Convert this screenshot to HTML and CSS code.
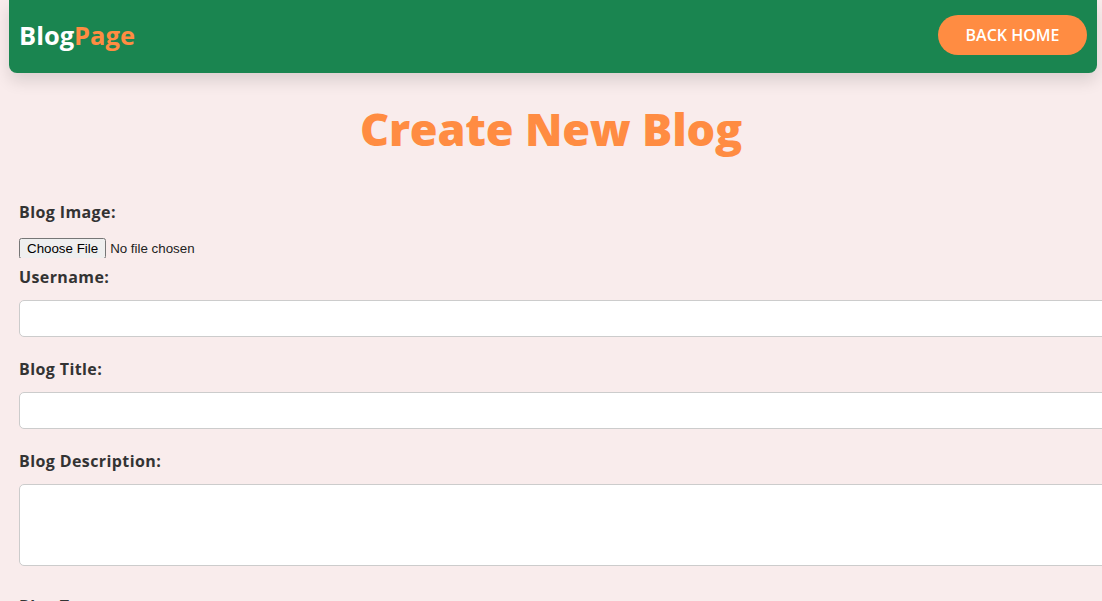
FILE: index.html
```html
<!DOCTYPE html>
<html lang="en">
<head>
<meta charset="utf-8">
<title>Create New Blog</title>
<link rel="stylesheet" href="styles.css">
</head>
<body>
<div class="page">
  <header class="topbar">
    <a class="logo" href="#"><span class="logo-a">Blog</span><span class="logo-b">Page</span></a>
    <a class="back-btn" href="#">BACK HOME</a>
  </header>
  <main class="content">
    <h1 class="title">Create New Blog</h1>
    <form class="blog-form">
      <label class="field-label label-image" for="img">Blog Image:</label>
      <input class="file-input" type="file" id="img">
      <label class="field-label label-user" for="user">Username:</label>
      <input class="text-input" type="text" id="user">
      <label class="field-label" for="title">Blog Title:</label>
      <input class="text-input" type="text" id="title">
      <label class="field-label" for="desc">Blog Description:</label>
      <textarea class="text-area" id="desc"></textarea>
      <label class="field-label" for="type">Blog Type:</label>
      <input class="text-input" type="text" id="type">
    </form>
  </main>
</div>
</body>
</html>
```
FILE: styles.css
```css
* { box-sizing: content-box; }
html, body {
  margin: 0;
  padding: 0;
  background: #f9ecec;
  overflow: hidden;
}
body {
  font-family: "Open Sans", "Liberation Sans", sans-serif;
  color: #333;
}
.page {
  width: 1102px;
  overflow: hidden;
}
.topbar {
  margin: 0 5px 0 9px;
  height: 70px;
  padding: 0 10px 3px 10px;
  background: #1a8550;
  border-radius: 0 0 8px 8px;
  box-shadow: 0 8px 16px rgba(0, 0, 0, 0.12);
  display: flex;
  align-items: center;
  justify-content: space-between;
}
.logo {
  text-decoration: none;
  font-size: 25.5px;
  font-weight: 700;
  letter-spacing: 0;
}
.logo-a { color: #ffffff; }
.logo-b { color: #ff8c42; }
.back-btn {
  display: flex;
  align-items: center;
  justify-content: center;
  width: 149px;
  height: 40px;
  border-radius: 20px;
  background: #ff8c42;
  color: #ffffff;
  text-decoration: none;
  font-size: 16px;
  font-weight: 600;
}
.content {
  padding: 0 0 0 19px;
}
.title {
  margin: 20px 0 0 -19px;
  height: 72px;
  line-height: 72px;
  text-align: center;
  color: #ff8c42;
  font-size: 45px;
  font-weight: 800;
  letter-spacing: -0.2px;
}
.blog-form {
  display: flex;
  flex-direction: column;
  align-items: flex-start;
}
.field-label {
  display: block;
  height: 24px;
  line-height: 24px;
  font-size: 16px;
  font-weight: 700;
  letter-spacing: 0.4px;
  color: #333;
  margin-bottom: 11px;
}
.label-image {
  margin-top: 35px;
  margin-bottom: 14px;
}
.file-input {
  font-family: "Liberation Sans", Arial, sans-serif;
  font-size: 13.33px;
  height: 20px;
  margin: 0 0 7px 0;
  color: #222;
}
.text-input, .text-area {
  display: block;
  width: 1100px;
  padding: 0 10px;
  border: 1px solid #cccccc;
  border-radius: 5px;
  background: #ffffff;
  margin: 0 0 20px 0;
}
.text-input {
  height: 35px;
}
.text-area {
  height: 80px;
  resize: vertical;
  margin-bottom: 28px;
}
```
